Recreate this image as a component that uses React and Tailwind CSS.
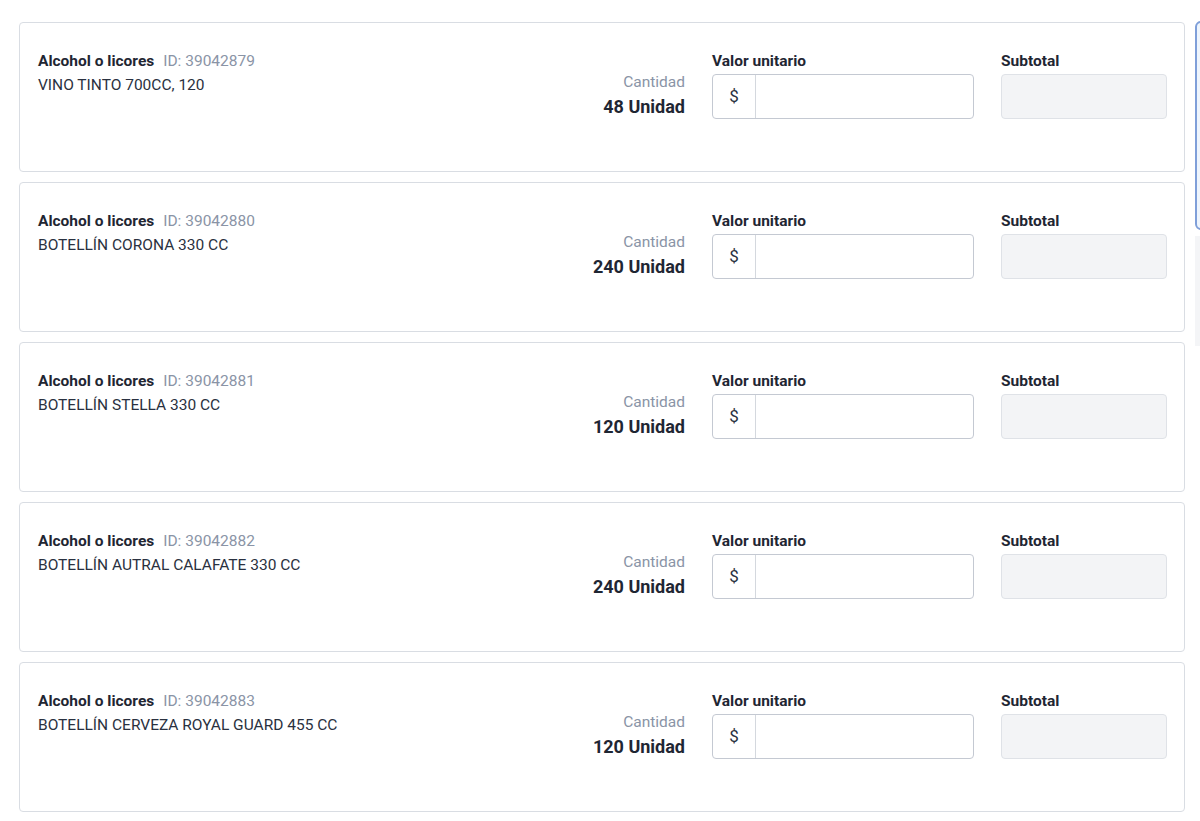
const items = [
  { id: '39042879', name: 'VINO TINTO 700CC, 120', qty: 48 },
  { id: '39042880', name: 'BOTELLÍN CORONA 330 CC', qty: 240 },
  { id: '39042881', name: 'BOTELLÍN STELLA 330 CC', qty: 120 },
  { id: '39042882', name: 'BOTELLÍN AUTRAL CALAFATE 330 CC', qty: 240 },
  { id: '39042883', name: 'BOTELLÍN CERVEZA ROYAL GUARD 455 CC', qty: 120 },
]

function ItemCard({ item }) {
  return (
    <div className="h-[150px] rounded-[4px] border border-[#d9dde3] bg-white pl-[18px] pr-[17px] pt-[28px] flex">
      <div className="flex-1 min-w-0">
        <div className="flex items-baseline leading-[20px]">
          <span className="text-[15.5px] font-bold text-[#1f2633]">Alcohol o licores</span>
          <span className="ml-[9px] text-[15.5px] text-[#8a94a6]">ID: {item.id}</span>
        </div>
        <div className="mt-[4px] text-[15.5px] leading-[20px] text-[#2a3140]">{item.name}</div>
      </div>
      <div className="pt-[21px] text-right shrink-0">
        <div className="text-[15.5px] leading-[20px] text-[#8a94a6]">Cantidad</div>
        <div className="mt-[5px] text-[18px] leading-[20px] font-bold text-[#1f2633]">{item.qty} Unidad</div>
      </div>
      <div className="ml-[27px] w-[262px] shrink-0">
        <div className="text-[15.5px] leading-[20px] font-bold text-[#1f2633]">Valor unitario</div>
        <div className="mt-[3px] flex h-[45px] rounded-[4px] border border-[#c4c9d2] bg-white">
          <div className="w-[43px] border-r border-[#d4d8de] flex items-center justify-center text-[17px] text-[#2a3140]">$</div>
          <input className="flex-1 min-w-0 px-3 outline-none bg-transparent" />
        </div>
      </div>
      <div className="ml-[27px] w-[166px] shrink-0">
        <div className="text-[15.5px] leading-[20px] font-bold text-[#1f2633]">Subtotal</div>
        <div className="mt-[3px] h-[45px] rounded-[4px] border border-[#dfe2e7] bg-[#f3f4f6]" />
      </div>
    </div>
  )
}

export default function App() {
  return (
    <div className="w-[1200px] h-[821px] overflow-hidden bg-white flex pl-[19px] pt-[22px]" style={{ fontFamily: 'Roboto, "Liberation Sans", sans-serif' }}>
      <div className="w-[1166px] shrink-0 flex flex-col gap-[10px]">
        {items.map((item) => (
          <ItemCard key={item.id} item={item} />
        ))}
      </div>
      <div className="ml-[10px] w-[300px] shrink-0 flex flex-col gap-[6px] -mt-[1px]">
        <div className="h-[209px] rounded-[6px] border-2 border-[#7f9fd9] bg-[#eef5fd]" />
        <div className="h-[110px] bg-[#f4f5f7]" />
      </div>
    </div>
  )
}
